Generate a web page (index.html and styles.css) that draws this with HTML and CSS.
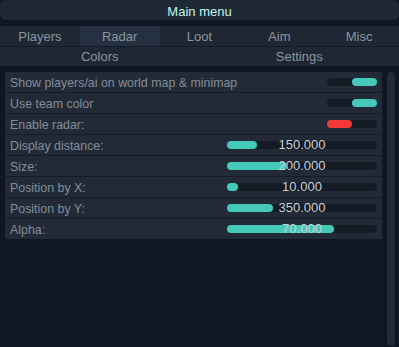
FILE: index.html
```html
<!DOCTYPE html>
<html lang="en">
<head>
    <meta charset="UTF-8">
    <title>Main menu</title>
    <link rel="stylesheet" href="styles.css">
</head>
<body>
    <div class="title-bar">Main menu</div>

    <div class="tabs">
        <div class="tab">Players</div>
        <div class="tab active">Radar</div>
        <div class="tab">Loot</div>
        <div class="tab">Aim</div>
        <div class="tab">Misc</div>
    </div>
    <div class="subtabs">
        <div class="tab">Colors</div>
        <div class="tab">Settings</div>
    </div>

    <div class="content">
        <div class="panel">
            <div class="row"><span class="label">Show players/ai on world map &amp; minimap</span><div class="toggle on"></div></div>
            <div class="row"><span class="label">Use team color</span><div class="toggle on"></div></div>
            <div class="row"><span class="label">Enable radar:</span><div class="toggle off"></div></div>
            <div class="row"><span class="label">Display distance:</span><div class="slider"><div class="fill" style="width:30px"></div><span class="value">150.000</span></div></div>
            <div class="row"><span class="label">Size:</span><div class="slider"><div class="fill" style="width:60px"></div><span class="value">200.000</span></div></div>
            <div class="row"><span class="label">Position by X:</span><div class="slider"><div class="fill" style="width:11px"></div><span class="value">10.000</span></div></div>
            <div class="row"><span class="label">Position by Y:</span><div class="slider"><div class="fill" style="width:46px"></div><span class="value">350.000</span></div></div>
            <div class="row"><span class="label">Alpha:</span><div class="slider"><div class="fill" style="width:107px"></div><span class="value">70.000</span></div></div>
        </div>
        <div class="scrollbar"></div>
    </div>
</body>
</html>
```

FILE: styles.css
```css
body{margin:0;background:#111722;font-family:"Liberation Sans",Arial,sans-serif;font-size:12.4px;color:#8b96a2;height:347px;overflow:hidden}

.title-bar{
    height:20px;
    line-height:24px;
    overflow:hidden;
    text-align:center;
    font-size:13px;
    color:#c2f5ef;
    background:#1f2935;
    border-radius:6px;
}

.tabs,.subtabs{display:grid;background:#1e2733}
.tabs{grid-template-columns:repeat(5,1fr);margin-top:6px;border-bottom:1px solid #141b25}
.subtabs{grid-template-columns:repeat(2,1fr)}
.tab{height:20px;line-height:21px;text-align:center;color:#8995a1;font-size:13px}
.subtabs .tab{height:19px;line-height:20px}
.tab.active{background:#253140}

.content{display:flex;align-items:flex-start;margin-top:6px}
.panel{width:377px;margin-left:5px;background:#212a36}
.scrollbar{width:8px;height:274px;margin-left:5px;background:#212a36;border-radius:4px}

.row{
    display:flex;
    align-items:center;
    justify-content:space-between;
    height:20px;
    padding:0 5px;
    border-bottom:1px solid #151c26;
}
.row:last-child{border-bottom:none}
.label{color:#838d98;white-space:nowrap;padding-top:1px}

.toggle{position:relative;width:50px;height:8px;border-radius:4px;background:#141b25}
.toggle::after{content:"";position:absolute;top:0;width:25px;height:8px;border-radius:4px}
.toggle.on::after{right:0;background:#46c9b9}
.toggle.off::after{left:0;background:#f23838}

.slider{position:relative;width:150px;height:8px;border-radius:4px;background:#141b25}
.slider .fill{height:8px;border-radius:4px;background:#46c9b9}
.slider .value{position:absolute;left:0;right:0;top:-5px;line-height:18px;text-align:center;color:#c9cfd6;font-size:13px}
```
